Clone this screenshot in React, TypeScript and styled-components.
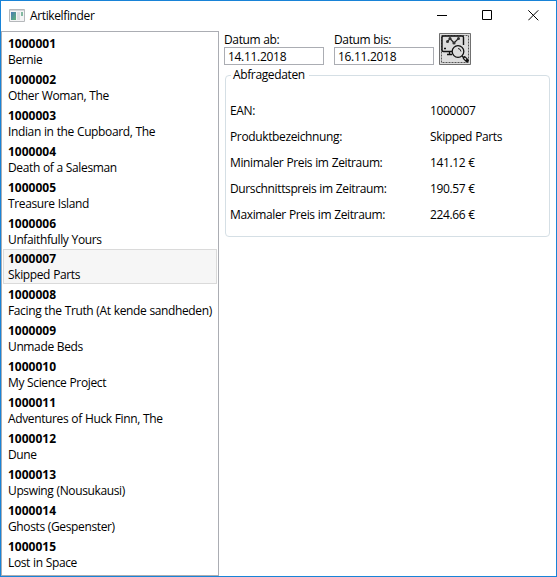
import React from "react";
import styled, { createGlobalStyle } from "styled-components";

const GlobalStyle = createGlobalStyle`
  * { box-sizing: border-box; }
  body { margin: 0; background: #fff; overflow: hidden; }
`;

const Window = styled.div`
  display: flex;
  flex-direction: column;
  width: 557px;
  height: 577px;
  border: 1px solid #1883d7;
  background: #fff;
  color: #000;
  font: 12px/16px "Open Sans", "Noto Sans", sans-serif;
  white-space: nowrap;
`;

const TitleBar = styled.header`
  display: flex;
  flex: none;
  align-items: center;
  height: 30px;
  padding: 0 0 1px 8px;
`;

const Label = styled.span`
  letter-spacing: -0.37px;
  word-spacing: 0.3px;
`;

const Title = styled(Label)`
  flex: 1;
  margin-left: 5px;
`;

const CaptionButton = styled.button<{ $width?: number }>`
  display: grid;
  place-items: center;
  width: ${(p) => p.$width ?? 45}px;
  height: 28px;
  padding: 0;
  border: 0;
  background: none;
`;

const Content = styled.main`
  display: flex;
  flex: 1;
  min-height: 0;
`;

const ArticleList = styled.ul`
  flex: none;
  width: 218px;
  height: 545px;
  margin: 0;
  padding: 1px;
  border: 1px solid #abadb3;
  list-style: none;
`;

const Article = styled.li<{ $selected: boolean }>`
  display: flex;
  flex-direction: column;
  height: ${(p) => (p.$selected ? 35 : 36)}px;
  padding: ${(p) => (p.$selected ? 1 : 2)}px 0 0 4px;
  border: 1px solid ${(p) => (p.$selected ? "#dadada" : "transparent")};
  background: ${(p) => (p.$selected ? "#f6f6f6" : "transparent")};
`;

const Ean = styled.strong`
  font-weight: 700;
`;

const Details = styled.section`
  flex: 1;
  padding: 1px 6px 0 5px;
`;

const Filters = styled.div`
  display: flex;
  height: 35px;
`;

const DateField = styled.label`
  display: flex;
  flex-direction: column;
  width: 100px;
  margin-right: 10px;
`;

const DateInput = styled.input`
  width: 100px;
  height: 18px;
  margin-top: -1px;
  padding: 0 3px;
  border: 1px solid #abadb3;
  border-radius: 0;
  outline: 0;
  background: #fff;
  color: #000;
  font: inherit;
  letter-spacing: -0.3px;
`;

const SearchButton = styled.button`
  width: 32px;
  height: 32px;
  margin: 1px 0 0 -5px;
  padding: 0;
  border: 0;
  background: #ddd;
`;

const Group = styled.fieldset`
  height: 170px;
  min-width: 0;
  margin: 0 0 0 1px;
  padding: 0 4px;
  border: 1px solid #d5dfe5;
  border-radius: 4px;
`;

const Legend = styled.legend`
  height: 16px;
  margin-left: 1px;
  padding: 0 4px 0 2px;
`;

const Facts = styled.dl`
  display: grid;
  grid-template-columns: 200px 1fr;
  grid-auto-rows: 26px;
  align-items: center;
  margin: 15px 0 0;
`;

const Term = styled.dt``;
const Value = styled.dd`
  margin: 0;
`;

const articles = [
  ["1000001", "Bernie"],
  ["1000002", "Other Woman, The"],
  ["1000003", "Indian in the Cupboard, The"],
  ["1000004", "Death of a Salesman"],
  ["1000005", "Treasure Island"],
  ["1000006", "Unfaithfully Yours"],
  ["1000007", "Skipped Parts"],
  ["1000008", "Facing the Truth (At kende sandheden)"],
  ["1000009", "Unmade Beds"],
  ["1000010", "My Science Project"],
  ["1000011", "Adventures of Huck Finn, The"],
  ["1000012", "Dune"],
  ["1000013", "Upswing (Nousukausi)"],
  ["1000014", "Ghosts (Gespenster)"],
  ["1000015", "Lost in Space"],
];

const facts = [
  ["EAN:", "1000007"],
  ["Produktbezeichnung:", "Skipped Parts"],
  ["Minimaler Preis im Zeitraum:", "141.12 €"],
  ["Durschnittspreis im Zeitraum:", "190.57 €"],
  ["Maximaler Preis im Zeitraum:", "224.66 €"],
];

const AppIcon = () => (
  <svg width="16" height="14" viewBox="0 0 16 14">
    <defs>
      <linearGradient id="screen" x1="0" y1="0" x2="1" y2="1">
        <stop offset="0" stopColor="#4779b5" />
        <stop offset="1" stopColor="#5fb477" />
      </linearGradient>
    </defs>
    <path d="M.5 .5h15v12H.5z" fill="#f4f4f5" stroke="#b5b8bb" />
    <path d="M1 1h14v1H1z" fill="#d2d5d8" />
    <path d="M2 3h5v8H2z" fill="url(#screen)" />
    <path d="M8 3h3v8H8z" fill="#dcdfe2" />
    <path d="M12 3h2v4h-2z" fill="#83b9a1" />
  </svg>
);

const SearchIcon = () => (
  <svg width="32" height="32" viewBox="0 0 32 32" fill="none" display="block">
    <path d="M.5 .5h31v31H.5z" stroke="#707070" />
    <path d="M2.5 2.5h27v27h-27z" stroke="#555" strokeDasharray="2 1" />
    <path d="M13 18.500H4.500Q3 18.500 3 17V4.500Q3 3 4.500 3H23Q24.500 3 24.500 4.500V12" stroke="#111" strokeWidth="1.4" />
    <path d="M10.500 18.500V22M8 21.500h5M5 15.500h2" stroke="#111" strokeWidth="1.3" />
    <path d="M8.500 9l2.500-3.500 4 4.500L19.500 5.500" stroke="#222" strokeWidth="1.2" />
    <g fill="#333">
      <circle cx="8.500" cy="8.500" r="1.500" />
      <circle cx="11" cy="5.500" r="1.500" />
      <circle cx="15" cy="10" r="1.600" />
      <circle cx="19.500" cy="5.500" r="1.500" />
    </g>
    <circle cx="19" cy="18.500" r="5.800" fill="#ddd" stroke="#111" strokeWidth="1.3" />
    <path d="M19 15.500q2.500 0 3 3" stroke="#222" />
    <path d="M23 23l1.500 1.500" stroke="#111" strokeWidth="1.300" />
    <path d="M25.500 25l2.500 2.500" stroke="#111" strokeWidth="3.600" strokeLinecap="round" />
    <path d="M25.500 25l1.500 1.500" stroke="#ddd" strokeWidth="1.200" />
  </svg>
);

export default function App() {
  return (
    <>
      <GlobalStyle />
      <Window>
        <TitleBar>
          <AppIcon />
          <Title>Artikelfinder</Title>
          <CaptionButton aria-label="Minimieren">
            <svg width="11" height="11"><path d="M0 5.500h10" stroke="#000" /></svg>
          </CaptionButton>
          <CaptionButton aria-label="Maximieren">
            <svg width="11" height="11"><path d="M.5 .5h9v9h-9z" stroke="#000" fill="none" /></svg>
          </CaptionButton>
          <CaptionButton aria-label="Schließen" $width={46}>
            <svg width="11" height="11"><path d="M.3 .3l10 10M10.300 .3l-10 10" stroke="#000" /></svg>
          </CaptionButton>
        </TitleBar>
        <Content>
          <ArticleList>
            {articles.map(([ean, name]) => (
              <Article key={ean} $selected={ean === "1000007"}>
                <Ean>{ean}</Ean>
                <Label>{name}</Label>
              </Article>
            ))}
          </ArticleList>
          <Details>
            <Filters>
              <DateField>
                <Label>Datum ab:</Label>
                <DateInput defaultValue="14.11.2018" />
              </DateField>
              <DateField>
                <Label>Datum bis:</Label>
                <DateInput defaultValue="16.11.2018" />
              </DateField>
              <SearchButton aria-label="Abfragen">
                <SearchIcon />
              </SearchButton>
            </Filters>
            <Group>
              <Legend><Label>Abfragedaten</Label></Legend>
              <Facts>
                {facts.map(([term, value]) => (
                  <React.Fragment key={term}>
                    <Term><Label>{term}</Label></Term>
                    <Value><Label>{value}</Label></Value>
                  </React.Fragment>
                ))}
              </Facts>
            </Group>
          </Details>
        </Content>
      </Window>
    </>
  );
}
